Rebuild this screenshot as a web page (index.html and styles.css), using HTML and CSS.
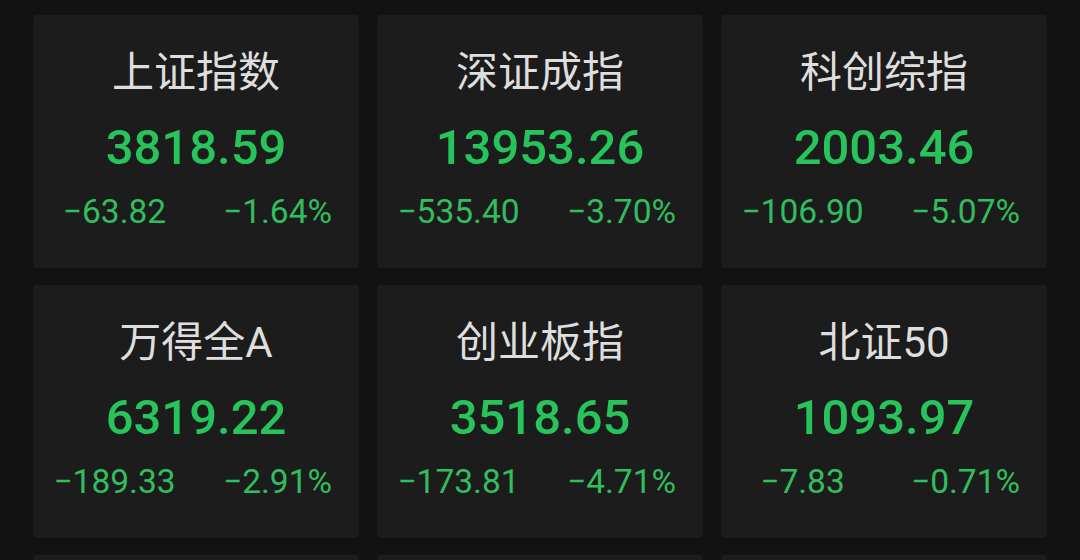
FILE: index.html
```html
<!DOCTYPE html>
<html lang="zh-CN">
<head>
    <meta charset="UTF-8">
    <meta name="viewport" content="width=device-width, initial-scale=1.0">
    <title>行情指数</title>
    <link rel="stylesheet" href="styles.css">
</head>
<body>
    <div class="grid">
        <div class="card">
            <div class="name">上证指数</div>
            <div class="price">3818.59</div>
            <div class="change"><span>−63.82</span><span>−1.64%</span></div>
        </div>
        <div class="card">
            <div class="name">深证成指</div>
            <div class="price">13953.26</div>
            <div class="change"><span>−535.40</span><span>−3.70%</span></div>
        </div>
        <div class="card">
            <div class="name">科创综指</div>
            <div class="price">2003.46</div>
            <div class="change"><span>−106.90</span><span>−5.07%</span></div>
        </div>
        <div class="card">
            <div class="name">万得全A</div>
            <div class="price">6319.22</div>
            <div class="change"><span>−189.33</span><span>−2.91%</span></div>
        </div>
        <div class="card">
            <div class="name">创业板指</div>
            <div class="price">3518.65</div>
            <div class="change"><span>−173.81</span><span>−4.71%</span></div>
        </div>
        <div class="card">
            <div class="name">北证50</div>
            <div class="price">1093.97</div>
            <div class="change"><span>−7.83</span><span>−0.71%</span></div>
        </div>
        <div class="card"></div>
        <div class="card"></div>
        <div class="card"></div>
    </div>
</body>
</html>
```

FILE: styles.css
```css
body {
    margin: 0;
    background-color: #121212;
    font-family: Roboto, "Noto Sans CJK SC", sans-serif;
}
.grid {
    display: grid;
    grid-template-columns: repeat(3, 326px);
    column-gap: 18px;
    row-gap: 17px;
    padding: 15px 0 0 33px;
}
.card {
    height: 253px;
    background: #1c1c1c;
    border-radius: 4px;
    display: flex;
    flex-direction: column;
    align-items: center;
    padding-top: 34px;
    box-sizing: border-box;
}
.name {
    font-size: 42px;
    line-height: 48px;
    color: #dedede;
}
.price {
    margin-top: 21px;
    font-size: 49px;
    line-height: 60px;
    font-weight: 500;
    color: #27c45b;
}
.change {
    margin-top: 14px;
    width: 100%;
    display: grid;
    grid-template-columns: 1fr 1fr;
    font-size: 33.5px;
    line-height: 40px;
    color: #30be5e;
    text-align: center;
}
```
